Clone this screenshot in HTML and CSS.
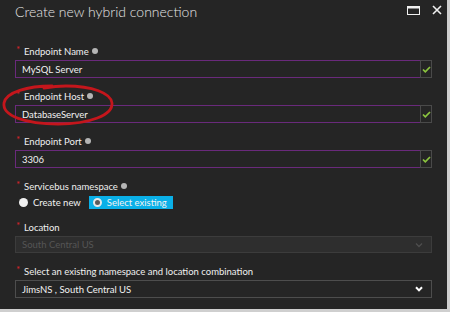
FILE: index.html
```html
<!DOCTYPE html>
<html>
    <head>
        <link rel="stylesheet" href="styles.css">
    </head>
    <body>
        <div class="blade">
            <div class="blade-header">
                <h1 class="blade-title">Create new hybrid connection</h1>
                <div class="blade-actions">
                    <svg class="icon-max" width="13" height="9" viewBox="0 0 13 9">
                        <rect x="0.5" y="0.5" width="12" height="8" fill="none" stroke="#f0f0f0" stroke-width="1"/>
                        <rect x="0" y="0" width="13" height="2.5" fill="#f0f0f0"/>
                    </svg>
                    <svg class="icon-close" width="10" height="10" viewBox="0 0 10 10">
                        <path d="M1 1 L9 9 M9 1 L1 9" stroke="#f0f0f0" stroke-width="1.6"/>
                    </svg>
                </div>
            </div>

            <div class="field">
                <label class="field-label"><span class="req">*</span>Endpoint Name<span class="info"></span></label>
                <div class="textbox">
                    <span class="textbox-value">MySQL Server</span>
                    <span class="textbox-check">
                        <svg width="9" height="7" viewBox="0 0 9 7"><path d="M1 3.5 L3.3 5.8 L8 1" fill="none" stroke="#8cc63f" stroke-width="1.7"/></svg>
                    </span>
                </div>
            </div>

            <div class="field">
                <label class="field-label"><span class="req">*</span>Endpoint Host<span class="info"></span></label>
                <div class="textbox">
                    <span class="textbox-value">DatabaseServer</span>
                    <span class="textbox-check">
                        <svg width="9" height="7" viewBox="0 0 9 7"><path d="M1 3.5 L3.3 5.8 L8 1" fill="none" stroke="#8cc63f" stroke-width="1.7"/></svg>
                    </span>
                </div>
            </div>

            <div class="field">
                <label class="field-label"><span class="req">*</span>Endpoint Port<span class="info"></span></label>
                <div class="textbox">
                    <span class="textbox-value">3306</span>
                    <span class="textbox-check">
                        <svg width="9" height="7" viewBox="0 0 9 7"><path d="M1 3.5 L3.3 5.8 L8 1" fill="none" stroke="#8cc63f" stroke-width="1.7"/></svg>
                    </span>
                </div>
            </div>

            <div class="field">
                <label class="field-label"><span class="req">*</span>Servicebus namespace<span class="info"></span></label>
                <div class="radio-row">
                    <span class="radio"><span class="radio-dot"></span>Create new</span>
                    <span class="radio radio-selected"><span class="radio-dot"></span>Select existing</span>
                </div>
            </div>

            <div class="field">
                <label class="field-label"><span class="req">*</span>Location</label>
                <div class="dropdown dropdown-disabled">
                    <span class="dropdown-value">South Central US</span>
                    <svg width="8" height="6" viewBox="0 0 8 6"><path d="M1 1.5 L4 4.5 L7 1.5" fill="none" stroke="#4e4e4e" stroke-width="1.3"/></svg>
                </div>
            </div>

            <div class="field">
                <label class="field-label"><span class="req">*</span>Select an existing namespace and location combination</label>
                <div class="dropdown">
                    <span class="dropdown-value">JimsNS , South Central US</span>
                    <svg width="8" height="6" viewBox="0 0 8 6"><path d="M1 1.2 L4 4.4 L7 1.2" fill="none" stroke="#ffffff" stroke-width="2"/></svg>
                </div>
            </div>

            <!-- red highlight drawn over the host field -->
            <svg class="highlight" width="120" height="48" viewBox="0 0 120 48">
                <path d="M52 4 C28 4 6 10 4 21 C2 34 26 42 58 42 C90 42 113 33 112 21 C111 11 92 4 66 4 C58 4 50 5 44 6"
                      fill="none" stroke="#c4161c" stroke-width="2.8" stroke-linecap="round"/>
            </svg>
        </div>
    </body>
</html>
```

FILE: styles.css
```css
* {
    box-sizing: border-box;
}

body {
    margin: 0;
    background: #cfcfcf;
    font-family: "Lato", "Open Sans", sans-serif;
}

.blade {
    position: relative;
    width: 447px;
    height: 309px;
    background: #252525;
    padding: 0 15px;
    overflow: hidden;
}

.blade-header {
    display: flex;
    justify-content: space-between;
    align-items: flex-start;
    height: 44px;
}

.blade-title {
    margin: 0;
    padding-top: 0;
    font-weight: 300;
    font-size: 14px;
    line-height: 24px;
    color: #e6e6e6;
}

.blade-actions {
    display: flex;
    align-items: center;
    gap: 12px;
    padding-top: 5px;
    margin-right: -10px;
}

.icon-max {
    margin-top: 1px;
}

.field {
    margin-bottom: 11px;
}

.field-label {
    display: flex;
    align-items: center;
    height: 14px;
    margin-bottom: 2px;
    font-size: 9.5px;
    color: #f0f0f0;
    white-space: nowrap;
}

.req {
    color: #d9242b;
    font-size: 10px;
    width: 8px;
    margin-left: 1px;
    align-self: flex-start;
    line-height: 10px;
}

.info {
    display: inline-block;
    width: 6px;
    height: 6px;
    margin-left: 3px;
    border-radius: 50%;
    background: #b5b5b5;
}

.textbox {
    display: flex;
    height: 18px;
}

.textbox-value {
    flex: 1;
    display: flex;
    align-items: center;
    padding-left: 6px;
    border: 1px solid #6a2a7c;
    border-right: none;
    font-size: 9.5px;
    color: #f2f2f2;
}

.textbox-check {
    width: 12px;
    display: flex;
    align-items: center;
    justify-content: center;
    border: 1px solid #4a4a4a;
}

.radio-row {
    display: flex;
    align-items: center;
    height: 13px;
    margin-top: 3px;
    margin-bottom: 1px;
}

.radio {
    display: flex;
    align-items: center;
    height: 13px;
    padding: 0 4px;
    font-size: 9.5px;
    color: #f2f2f2;
    white-space: nowrap;
}

.radio:first-child {
    padding-left: 4px;
    margin-right: 4px;
}

.radio-dot {
    flex-shrink: 0;
    width: 9px;
    height: 9px;
    margin-right: 5px;
    border-radius: 50%;
    background: #f0f0f0;
}

.radio-selected {
    width: 84px;
    background: #0ab0e8;
}

.radio-selected .radio-dot {
    background: #5a5a5a;
    border: 2px solid #e8e8e8;
}

.dropdown {
    display: flex;
    align-items: center;
    justify-content: space-between;
    height: 18px;
    padding: 0 8px 0 6px;
    border: 1px solid #4d4d4d;
    font-size: 9.5px;
    color: #f2f2f2;
}

.dropdown-disabled {
    height: 17px;
    background: #2e2e2e;
    border-color: #3c3c3c;
    color: #555555;
}

.highlight {
    position: absolute;
    left: 0;
    top: 82px;
}
```
